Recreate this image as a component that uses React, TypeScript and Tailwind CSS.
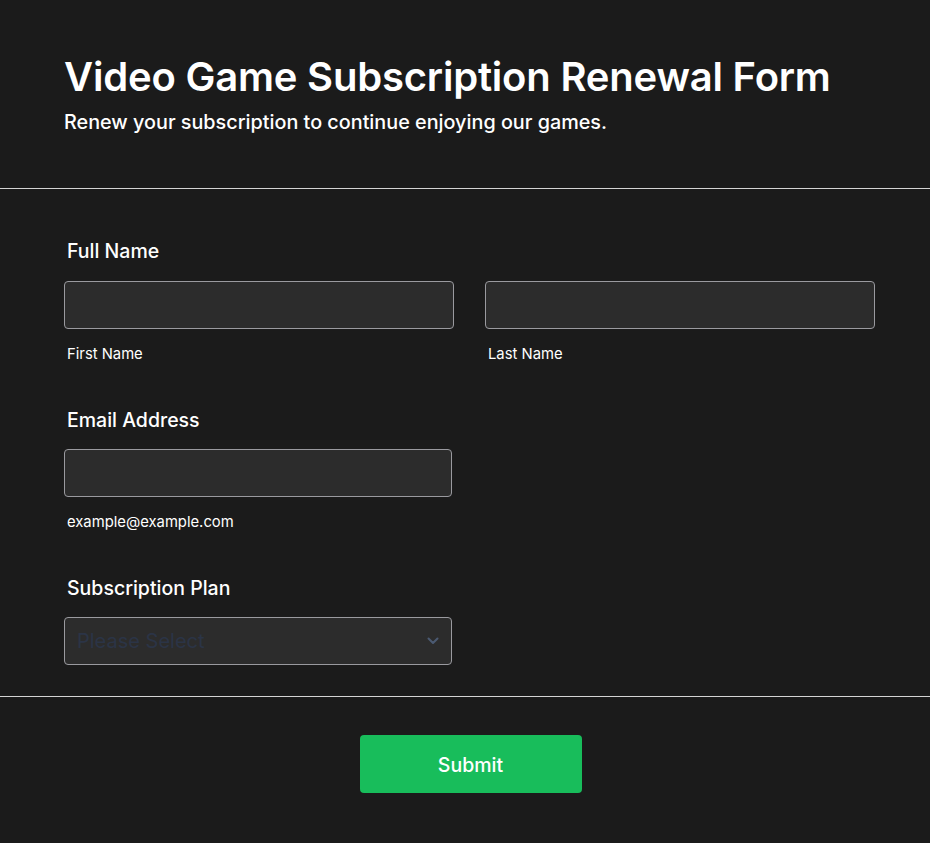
export default function App() {
  return (
    <div className="min-h-screen bg-[#1b1b1b] text-white font-['Inter',sans-serif]">
      <header className="pl-[64px] pr-[55px] pt-[53px] pb-[52px] border-b border-[#d4d4d4]">
        <h1 className="text-[40px] leading-[48px] font-semibold tracking-[-0.2px]">
          Video Game Subscription Renewal Form
        </h1>
        <p className="mt-[7px] text-[19.8px] leading-[28px] font-medium">
          Renew your subscription to continue enjoying our games.
        </p>
      </header>

      <form className="pl-[64px] pr-[55px] pt-[48px] pb-[31px] border-b border-[#d4d4d4]">
        <label className="block pl-[3px] text-[19.5px] leading-[28px] font-medium">Full Name</label>
        <div className="mt-[16px] grid grid-cols-2 gap-x-[31px]">
          <div>
            <input
              type="text"
              className="block h-[48px] w-full rounded-[4px] border border-[#9a9a9f] bg-[#2c2c2c] px-3 text-white outline-none"
            />
            <span className="mt-[15px] block pl-[3px] text-[14.8px] leading-[20px]">First Name</span>
          </div>
          <div>
            <input
              type="text"
              className="block h-[48px] w-full rounded-[4px] border border-[#9a9a9f] bg-[#2c2c2c] px-3 text-white outline-none"
            />
            <span className="mt-[15px] block pl-[3px] text-[14.8px] leading-[20px]">Last Name</span>
          </div>
        </div>

        <label className="mt-[42px] block pl-[3px] text-[19.5px] leading-[28px] font-medium">Email Address</label>
        <input
          type="email"
          className="mt-[15px] block h-[48px] w-[388px] rounded-[4px] border border-[#9a9a9f] bg-[#2c2c2c] px-3 text-white outline-none"
        />
        <span className="mt-[15px] block pl-[3px] text-[14.8px] leading-[20px]">example@example.com</span>

        <label className="mt-[42px] block pl-[3px] text-[19.5px] leading-[28px] font-medium">Subscription Plan</label>
        <div className="relative mt-[15px] w-[388px]">
          <select
            defaultValue=""
            className="block h-[48px] w-full appearance-none rounded-[4px] border border-[#9a9a9f] bg-[#2c2c2c] pl-[12px] pr-10 text-[20px] text-[#2b3446] outline-none"
          >
            <option value="" disabled>
              Please Select
            </option>
            <option>Monthly</option>
            <option>Quarterly</option>
            <option>Yearly</option>
          </select>
          <svg
            className="pointer-events-none absolute right-[13px] top-1/2 -translate-y-1/2"
            width="12"
            height="8"
            viewBox="0 0 12 8"
            fill="none"
          >
            <path d="M1.5 1.5 6 6l4.5-4.5" stroke="#4b5a72" strokeWidth="2" strokeLinecap="round" strokeLinejoin="round" />
          </svg>
        </div>
      </form>

      <div className="flex justify-center pl-[64px] pr-[53px] pt-[38px] pb-[50px]">
        <button
          type="submit"
          className="h-[58px] w-[222px] rounded-[4px] bg-[#18bd5b] pt-[3px] text-[19.5px] font-medium text-white"
        >
          Submit
        </button>
      </div>
    </div>
  )
}
